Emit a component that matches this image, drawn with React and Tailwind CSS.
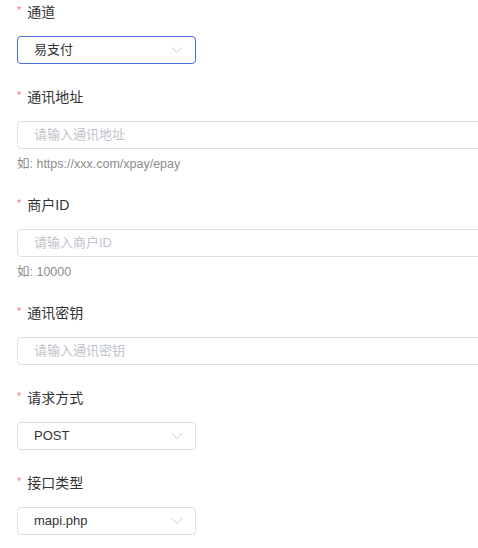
import React from 'react';

const Chevron = () => (
  <svg width="12" height="8" viewBox="0 0 12 8" fill="none" stroke="#c6c9cf" strokeWidth="1">
    <polyline points="1 1.5 6 6.5 11 1.5" />
  </svg>
);

const Label = ({ children }) => (
  <div className="h-[22px] leading-[22px] mb-[13px] text-[14px] text-[#333] flex items-center">
    <span className="text-[#f07c7c] text-[11px] mr-[6px] leading-none mt-[-3px]">*</span>
    {children}
  </div>
);

const Select = ({ value, active }) => (
  <div
    className={`w-[179px] h-[28px] rounded-[4px] border bg-white flex items-center justify-between pl-[16px] pr-[12px] text-[13px] text-[#333] ${
      active ? 'border-[#4a6ad6]' : 'border-[#dcdfe6]'
    }`}
  >
    <span>{value}</span>
    <Chevron />
  </div>
);

const Input = ({ placeholder }) => (
  <div className="w-[520px] h-[28px] rounded-[4px] border border-[#dcdfe6] bg-white flex items-center pl-[16px] text-[13px] text-[#c0c4cc]">
    {placeholder}
  </div>
);

const Item = ({ label, help, children }) => (
  <div className="mb-[22px]">
    <Label>{label}</Label>
    {children}
    {help && <div className="mt-[7px] leading-[16px] text-[12.5px] text-[#8c8c8c]">{help}</div>}
  </div>
);

export default function App() {
  return (
    <div
      className="w-full min-h-screen overflow-hidden bg-white pl-[17px] pt-[0.5px]"
      style={{ fontFamily: '"Liberation Sans", "Noto Sans CJK SC", sans-serif' }}
    >
      <Item label="通道">
        <Select value="易支付" active />
      </Item>
      <Item label="通讯地址" help="如: https://xxx.com/xpay/epay">
        <Input placeholder="请输入通讯地址" />
      </Item>
      <Item label="商户ID" help="如: 10000">
        <Input placeholder="请输入商户ID" />
      </Item>
      <Item label="通讯密钥">
        <Input placeholder="请输入通讯密钥" />
      </Item>
      <Item label="请求方式">
        <Select value="POST" />
      </Item>
      <Item label="接口类型">
        <Select value="mapi.php" />
      </Item>
    </div>
  );
}
